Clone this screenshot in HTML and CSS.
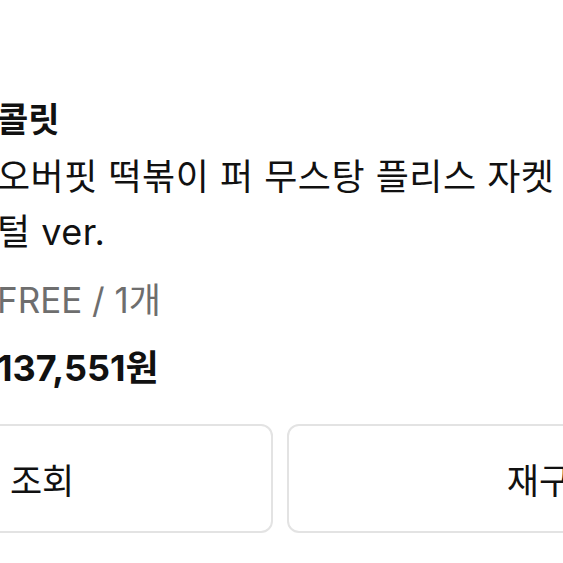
FILE: index.html
```html
<!DOCTYPE html>
<html lang="ko">
<head>
    <meta charset="UTF-8">
    <meta name="viewport" content="width=device-width, initial-scale=1.0">
    <title>주문 상세</title>
    <link rel="stylesheet" href="styles.css">
</head>
<body>
    <div class="order-item">
        <h2 class="brand">콜릿</h2>
        <p class="product-name">오버핏 떡볶이 퍼 무스탕 플리스 자켓<br>털 ver.</p>
        <p class="product-option">FREE / 1개</p>
        <p class="product-price">137,551원</p>
    </div>

    <div class="order-actions">
        <button class="action-btn">배송 조회</button>
        <button class="action-btn">재구매</button>
    </div>
</body>
</html>
```

FILE: styles.css
```css
* {
    margin: 0;
    padding: 0;
    box-sizing: border-box;
}

body {
    width: 563px;
    height: 563px;
    overflow: hidden;
    background: #ffffff;
    color: #111111;
    font-family: "Inter", "Noto Sans CJK KR", sans-serif;
}

.order-item {
    margin-left: -3px;
    padding-top: 100px;
}

.brand {
    font-size: 34px;
    font-weight: bold;
    line-height: 40px;
}

.product-name {
    margin-top: 10px;
    font-size: 36px;
    letter-spacing: 0.5px;
    line-height: 55px;
}

.product-option {
    margin-top: 20px;
    font-size: 35px;
    line-height: 40px;
    color: #6e6e6e;
}

.product-price {
    margin-top: 28px;
    font-size: 36px;
    font-weight: bold;
    line-height: 40px;
}

.order-actions {
    display: flex;
    gap: 14px;
    width: 1086px;
    margin-left: -263px;
    margin-top: 36px;
}

.action-btn {
    flex: 1;
    height: 109px;
    background: #ffffff;
    border: 2px solid #e3e3e3;
    border-radius: 12px;
    font-family: inherit;
    font-size: 35px;
    color: #111111;
}
```
